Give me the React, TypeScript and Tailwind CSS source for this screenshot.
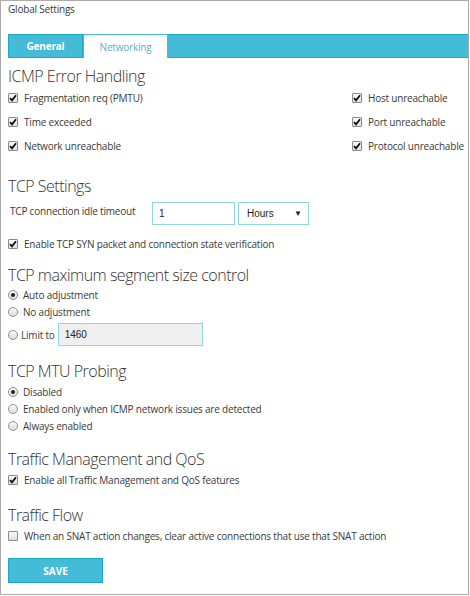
import React from 'react';

const BLUE = 'bg-[#45bcd7]';

function Check({ checked }: { checked: boolean }) {
  return (
    <span className="w-[10px] h-[10px] shrink-0 border border-[#8a8a8a] rounded-[1px] bg-gradient-to-b from-[#fbfbfb] to-[#dedede] flex items-center justify-center">
      {checked && (
        <svg width="8" height="8" viewBox="0 0 8 8">
          <path d="M1 4.2 L3 6.4 L7 1.2" fill="none" stroke="#111" strokeWidth="1.8" />
        </svg>
      )}
    </span>
  );
}

function Radio({ checked }: { checked: boolean }) {
  return (
    <span className="w-[10px] h-[10px] shrink-0 rounded-full border border-[#8f8f8f] bg-gradient-to-b from-[#fafafa] to-[#dcdcdc] flex items-center justify-center">
      {checked && <span className="w-[4px] h-[4px] rounded-full bg-[#222]" />}
    </span>
  );
}

function CheckRow({ label, checked = true, tall = false }: { label: string; checked?: boolean; tall?: boolean }) {
  return (
    <div className={`flex items-center gap-[6px] ${tall ? 'h-[24px]' : 'h-[17px]'}`}>
      <Check checked={checked} />
      <span>{label}</span>
    </div>
  );
}

function RadioRow({ label, checked = false }: { label: string; checked?: boolean }) {
  return (
    <div className="flex items-center gap-[5px] h-[17px]">
      <Radio checked={checked} />
      <span>{label}</span>
    </div>
  );
}

function Heading({ children, className = '' }: { children: React.ReactNode; className?: string }) {
  return (
    <h2 className={`text-[16px] leading-[19px] font-light tracking-[-0.5px] text-[#333] ${className}`}>{children}</h2>
  );
}

export default function App() {
  return (
    <div className="w-[469px] h-[595px] border border-[#ababab] bg-white text-[10px] tracking-[-0.2px] leading-[16px] text-[#3a3a3a] font-['Open_Sans',sans-serif] overflow-hidden">
      <div className="pl-[7px]">
        <div className="h-[16px]">Global Settings</div>

        {/* Tabs */}
        <div className="mt-[17px] flex h-[24px]">
          <div className={`w-[75px] ${BLUE} border border-[#1fa6c9] text-white font-bold flex items-center justify-center`}>
            General
          </div>
          <div className="w-[85px] border-t border-l border-r border-[#45bcd7] bg-white text-[#5ab2cf] flex items-center justify-center">
            Networking
          </div>
          <div className={`flex-1 ${BLUE} border-t border-b border-[#1fa6c9]`} />
        </div>

        {/* ICMP */}
        <Heading className="mt-[9px]">ICMP Error Handling</Heading>
        <div className="flex">
          <div className="w-[344px]">
            <CheckRow tall label="Fragmentation req (PMTU)" />
            <CheckRow tall label="Time exceeded" />
            <CheckRow tall label="Network unreachable" />
          </div>
          <div>
            <CheckRow tall label="Host unreachable" />
            <CheckRow tall label="Port unreachable" />
            <CheckRow tall label="Protocol unreachable" />
          </div>
        </div>

        {/* TCP Settings */}
        <Heading className="mt-[19px]">TCP Settings</Heading>
        <div className="mt-[6px] flex items-start h-[23px]">
          <span className="ml-[2px] w-[142px] pt-[1px]">TCP connection idle timeout</span>
          <div className="w-[83px] h-[23px] border border-[#8fd6e6] flex items-center pl-[6px] text-[10px] tracking-normal text-[#222] font-['Liberation_Sans',sans-serif]">
            1
          </div>
          <div className="ml-[3px] w-[71px] h-[23px] border border-[#8fd6e6] flex items-center justify-between pl-[8px] pr-[6px] text-[10px] tracking-normal text-[#222] font-['Liberation_Sans',sans-serif]">
            <span>Hours</span>
            <span className="text-[8px]">▼</span>
          </div>
        </div>
        <div className="mt-[7px]">
          <CheckRow tall label="Enable TCP SYN packet and connection state verification" />
        </div>

        {/* MSS */}
        <Heading className="mt-[10px]">TCP maximum segment size control</Heading>
        <div className="mt-[1px]">
          <RadioRow checked label="Auto adjustment" />
          <RadioRow label="No adjustment" />
        </div>
        <div className="mt-[3px] flex items-center h-[23px] gap-[3px]">
          <Radio checked={false} />
          <span>Limit to</span>
          <div className="w-[145px] h-[23px] border border-[#8fd6e6] bg-[#efefef] flex items-center pl-[6px] text-[10px] tracking-normal text-[#222] font-['Liberation_Sans',sans-serif]">
            1460
          </div>
        </div>

        {/* MTU */}
        <Heading className="mt-[16px]">TCP MTU Probing</Heading>
        <div className="mt-[2px]">
          <RadioRow checked label="Disabled" />
          <RadioRow label="Enabled only when ICMP network issues are detected" />
          <RadioRow label="Always enabled" />
        </div>

        {/* QoS */}
        <Heading className="mt-[16px]">Traffic Management and QoS</Heading>
        <div className="mt-[2px]">
          <CheckRow label="Enable all Traffic Management and QoS features" />
        </div>

        {/* Traffic Flow */}
        <Heading className="mt-[18px]">Traffic Flow</Heading>
        <div className="mt-[2px]">
          <CheckRow checked={false} label="When an SNAT action changes, clear active connections that use that SNAT action" />
        </div>

        <button className={`mt-[14px] w-[95px] h-[25px] ${BLUE} border border-[#1fa6c9] text-white font-bold text-[10px] tracking-normal flex items-center justify-center`}>
          SAVE
        </button>
      </div>
    </div>
  );
}
